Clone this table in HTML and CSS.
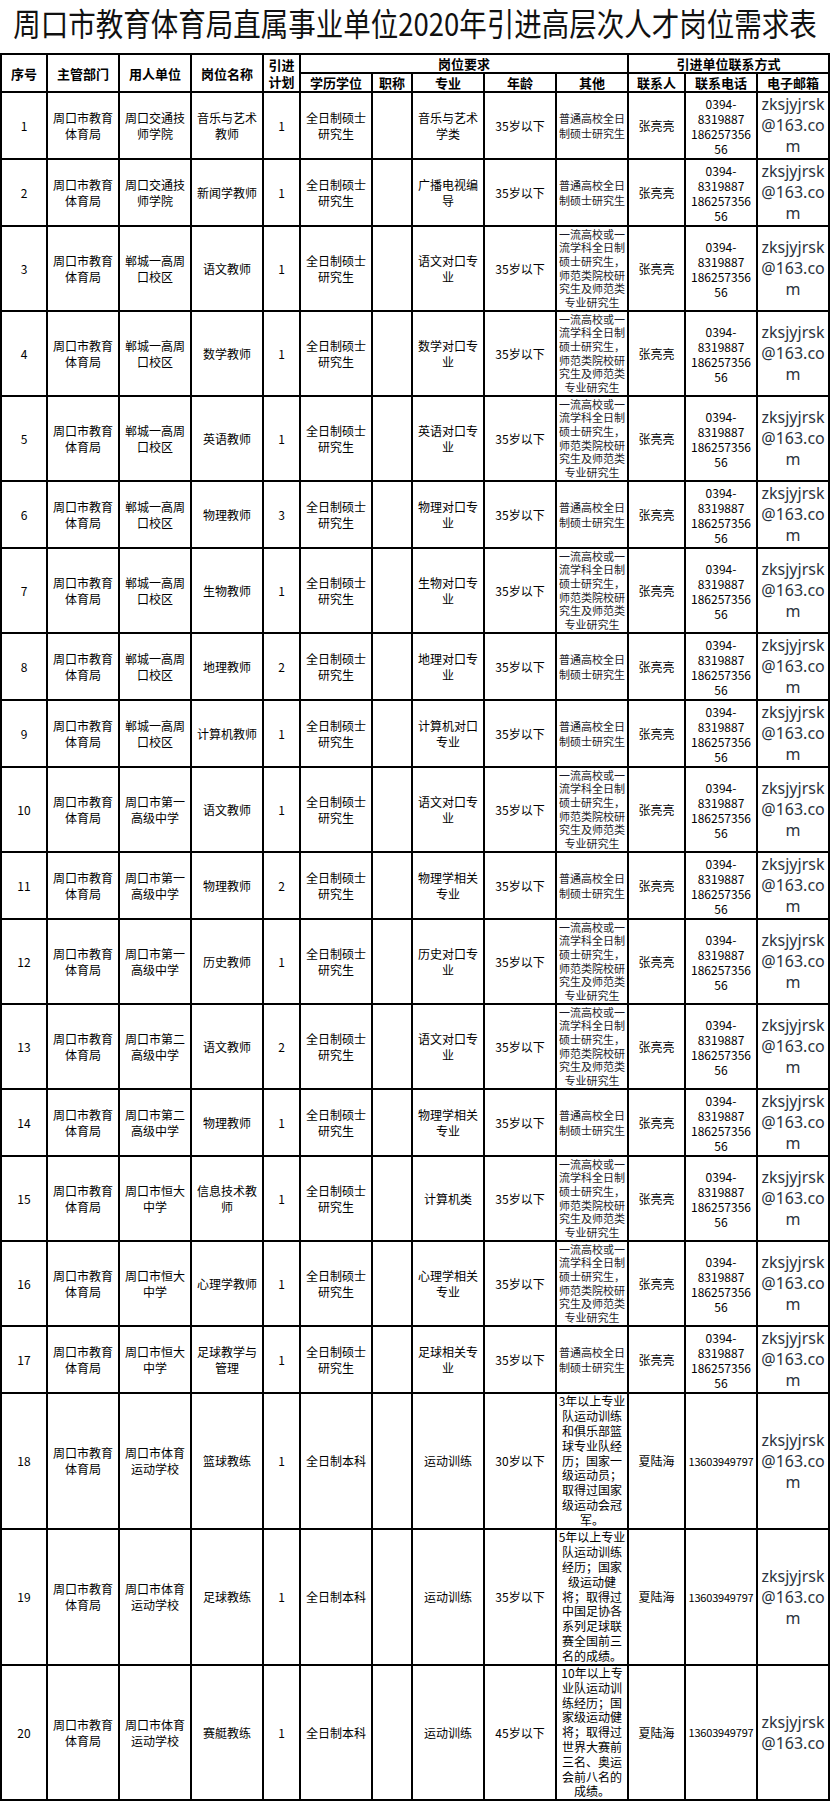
FILE: index.html
```html
<!DOCTYPE html>
<html lang="zh-CN">
<head>
<meta charset="utf-8">
<title>周口市教育体育局直属事业单位2020年引进高层次人才岗位需求表</title>
<link rel="stylesheet" href="styles.css">
</head>
<body>
<div class="title"><span class="title-text">周口市教育体育局直属事业单位2020年引进高层次人才岗位需求表</span></div>
<table class="sheet">
<colgroup>
<col class="c-no"><col class="c-w72"><col class="c-w72"><col class="c-w72"><col class="c-plan"><col class="c-w72"><col class="c-title"><col class="c-w72"><col class="c-w72"><col class="c-w72"><col class="c-person"><col class="c-w72"><col class="c-w72">
</colgroup>
<thead>
<tr class="h1">
<th rowspan="2">序号</th><th rowspan="2">主管部门</th><th rowspan="2">用人单位</th><th rowspan="2">岗位名称</th><th rowspan="2" class="plan">引进<br>计划</th>
<th colspan="5">岗位要求</th><th colspan="3">引进单位联系方式</th>
</tr>
<tr class="h2">
<th>学历学位</th><th>职称</th><th>专业</th><th>年龄</th><th>其他</th><th>联系人</th><th>联系电话</th><th>电子邮箱</th>
</tr>
</thead>
<tbody>
<tr class="r2"><td class="no">1</td><td>周口市教育体育局</td><td>周口交通技师学院</td><td>音乐与艺术教师</td><td class="no">1</td><td>全日制硕士研究生</td><td></td><td>音乐与艺术学类</td><td>35岁以下</td><td class="oth">普通高校全日<br>制硕士研究生</td><td>张亮亮</td><td class="tel">0394-<br>8319887<br>186257356<br>56</td><td class="mail">zksjyjrsk<br>@163.co<br>m</td></tr>
<tr class="r2"><td class="no">2</td><td>周口市教育体育局</td><td>周口交通技师学院</td><td>新闻学教师</td><td class="no">1</td><td>全日制硕士研究生</td><td></td><td>广播电视编导</td><td>35岁以下</td><td class="oth">普通高校全日<br>制硕士研究生</td><td>张亮亮</td><td class="tel">0394-<br>8319887<br>186257356<br>56</td><td class="mail">zksjyjrsk<br>@163.co<br>m</td></tr>
<tr class="r6"><td class="no">3</td><td>周口市教育体育局</td><td>郸城一高周口校区</td><td>语文教师</td><td class="no">1</td><td>全日制硕士研究生</td><td></td><td>语文对口专业</td><td>35岁以下</td><td class="oth oth-y">一流高校或一<br>流学科全日制<br>硕士研究生，<br>师范类院校研<br>究生及师范类<br>专业研究生</td><td>张亮亮</td><td class="tel">0394-<br>8319887<br>186257356<br>56</td><td class="mail">zksjyjrsk<br>@163.co<br>m</td></tr>
<tr class="r6"><td class="no">4</td><td>周口市教育体育局</td><td>郸城一高周口校区</td><td>数学教师</td><td class="no">1</td><td>全日制硕士研究生</td><td></td><td>数学对口专业</td><td>35岁以下</td><td class="oth oth-y">一流高校或一<br>流学科全日制<br>硕士研究生，<br>师范类院校研<br>究生及师范类<br>专业研究生</td><td>张亮亮</td><td class="tel">0394-<br>8319887<br>186257356<br>56</td><td class="mail">zksjyjrsk<br>@163.co<br>m</td></tr>
<tr class="r6"><td class="no">5</td><td>周口市教育体育局</td><td>郸城一高周口校区</td><td>英语教师</td><td class="no">1</td><td>全日制硕士研究生</td><td></td><td>英语对口专业</td><td>35岁以下</td><td class="oth oth-y">一流高校或一<br>流学科全日制<br>硕士研究生，<br>师范类院校研<br>究生及师范类<br>专业研究生</td><td>张亮亮</td><td class="tel">0394-<br>8319887<br>186257356<br>56</td><td class="mail">zksjyjrsk<br>@163.co<br>m</td></tr>
<tr class="r2"><td class="no">6</td><td>周口市教育体育局</td><td>郸城一高周口校区</td><td>物理教师</td><td class="no">3</td><td>全日制硕士研究生</td><td></td><td>物理对口专业</td><td>35岁以下</td><td class="oth">普通高校全日<br>制硕士研究生</td><td>张亮亮</td><td class="tel">0394-<br>8319887<br>186257356<br>56</td><td class="mail">zksjyjrsk<br>@163.co<br>m</td></tr>
<tr class="r6"><td class="no">7</td><td>周口市教育体育局</td><td>郸城一高周口校区</td><td>生物教师</td><td class="no">1</td><td>全日制硕士研究生</td><td></td><td>生物对口专业</td><td>35岁以下</td><td class="oth oth-y">一流高校或一<br>流学科全日制<br>硕士研究生，<br>师范类院校研<br>究生及师范类<br>专业研究生</td><td>张亮亮</td><td class="tel">0394-<br>8319887<br>186257356<br>56</td><td class="mail">zksjyjrsk<br>@163.co<br>m</td></tr>
<tr class="r2"><td class="no">8</td><td>周口市教育体育局</td><td>郸城一高周口校区</td><td>地理教师</td><td class="no">2</td><td>全日制硕士研究生</td><td></td><td>地理对口专业</td><td>35岁以下</td><td class="oth">普通高校全日<br>制硕士研究生</td><td>张亮亮</td><td class="tel">0394-<br>8319887<br>186257356<br>56</td><td class="mail">zksjyjrsk<br>@163.co<br>m</td></tr>
<tr class="r2"><td class="no">9</td><td>周口市教育体育局</td><td>郸城一高周口校区</td><td>计算机教师</td><td class="no">1</td><td>全日制硕士研究生</td><td></td><td>计算机对口专业</td><td>35岁以下</td><td class="oth">普通高校全日<br>制硕士研究生</td><td>张亮亮</td><td class="tel">0394-<br>8319887<br>186257356<br>56</td><td class="mail">zksjyjrsk<br>@163.co<br>m</td></tr>
<tr class="r6"><td class="no">10</td><td>周口市教育体育局</td><td>周口市第一高级中学</td><td>语文教师</td><td class="no">1</td><td>全日制硕士研究生</td><td></td><td>语文对口专业</td><td>35岁以下</td><td class="oth oth-y">一流高校或一<br>流学科全日制<br>硕士研究生，<br>师范类院校研<br>究生及师范类<br>专业研究生</td><td>张亮亮</td><td class="tel">0394-<br>8319887<br>186257356<br>56</td><td class="mail">zksjyjrsk<br>@163.co<br>m</td></tr>
<tr class="r2"><td class="no">11</td><td>周口市教育体育局</td><td>周口市第一高级中学</td><td>物理教师</td><td class="no">2</td><td>全日制硕士研究生</td><td></td><td>物理学相关专业</td><td>35岁以下</td><td class="oth">普通高校全日<br>制硕士研究生</td><td>张亮亮</td><td class="tel">0394-<br>8319887<br>186257356<br>56</td><td class="mail">zksjyjrsk<br>@163.co<br>m</td></tr>
<tr class="r6"><td class="no">12</td><td>周口市教育体育局</td><td>周口市第一高级中学</td><td>历史教师</td><td class="no">1</td><td>全日制硕士研究生</td><td></td><td>历史对口专业</td><td>35岁以下</td><td class="oth oth-y">一流高校或一<br>流学科全日制<br>硕士研究生，<br>师范类院校研<br>究生及师范类<br>专业研究生</td><td>张亮亮</td><td class="tel">0394-<br>8319887<br>186257356<br>56</td><td class="mail">zksjyjrsk<br>@163.co<br>m</td></tr>
<tr class="r6"><td class="no">13</td><td>周口市教育体育局</td><td>周口市第二高级中学</td><td>语文教师</td><td class="no">2</td><td>全日制硕士研究生</td><td></td><td>语文对口专业</td><td>35岁以下</td><td class="oth oth-y">一流高校或一<br>流学科全日制<br>硕士研究生，<br>师范类院校研<br>究生及师范类<br>专业研究生</td><td>张亮亮</td><td class="tel">0394-<br>8319887<br>186257356<br>56</td><td class="mail">zksjyjrsk<br>@163.co<br>m</td></tr>
<tr class="r2"><td class="no">14</td><td>周口市教育体育局</td><td>周口市第二高级中学</td><td>物理教师</td><td class="no">1</td><td>全日制硕士研究生</td><td></td><td>物理学相关专业</td><td>35岁以下</td><td class="oth">普通高校全日<br>制硕士研究生</td><td>张亮亮</td><td class="tel">0394-<br>8319887<br>186257356<br>56</td><td class="mail">zksjyjrsk<br>@163.co<br>m</td></tr>
<tr class="r6"><td class="no">15</td><td>周口市教育体育局</td><td>周口市恒大中学</td><td>信息技术教师</td><td class="no">1</td><td>全日制硕士研究生</td><td></td><td>计算机类</td><td>35岁以下</td><td class="oth oth-y">一流高校或一<br>流学科全日制<br>硕士研究生，<br>师范类院校研<br>究生及师范类<br>专业研究生</td><td>张亮亮</td><td class="tel">0394-<br>8319887<br>186257356<br>56</td><td class="mail">zksjyjrsk<br>@163.co<br>m</td></tr>
<tr class="r6"><td class="no">16</td><td>周口市教育体育局</td><td>周口市恒大中学</td><td>心理学教师</td><td class="no">1</td><td>全日制硕士研究生</td><td></td><td>心理学相关专业</td><td>35岁以下</td><td class="oth oth-y">一流高校或一<br>流学科全日制<br>硕士研究生，<br>师范类院校研<br>究生及师范类<br>专业研究生</td><td>张亮亮</td><td class="tel">0394-<br>8319887<br>186257356<br>56</td><td class="mail">zksjyjrsk<br>@163.co<br>m</td></tr>
<tr class="r2"><td class="no">17</td><td>周口市教育体育局</td><td>周口市恒大中学</td><td>足球教学与管理</td><td class="no">1</td><td>全日制硕士研究生</td><td></td><td>足球相关专业</td><td>35岁以下</td><td class="oth">普通高校全日<br>制硕士研究生</td><td>张亮亮</td><td class="tel">0394-<br>8319887<br>186257356<br>56</td><td class="mail">zksjyjrsk<br>@163.co<br>m</td></tr>
<tr class="r9"><td class="no">18</td><td>周口市教育体育局</td><td>周口市体育运动学校</td><td>篮球教练</td><td class="no">1</td><td>全日制本科</td><td></td><td>运动训练</td><td>30岁以下</td><td class="oth oth-l">3年以上专业<br>队运动训练<br>和俱乐部篮<br>球专业队经<br>历；国家一<br>级运动员；<br>取得过国家<br>级运动会冠<br>军。</td><td>夏陆海</td><td class="tel tel-1">13603949797</td><td class="mail">zksjyjrsk<br>@163.co<br>m</td></tr>
<tr class="r9"><td class="no">19</td><td>周口市教育体育局</td><td>周口市体育运动学校</td><td>足球教练</td><td class="no">1</td><td>全日制本科</td><td></td><td>运动训练</td><td>35岁以下</td><td class="oth oth-l">5年以上专业<br>队运动训练<br>经历；国家<br>级运动健<br>将；取得过<br>中国足协各<br>系列足球联<br>赛全国前三<br>名的成绩。</td><td>夏陆海</td><td class="tel tel-1">13603949797</td><td class="mail">zksjyjrsk<br>@163.co<br>m</td></tr>
<tr class="r9 last"><td class="no">20</td><td>周口市教育体育局</td><td>周口市体育运动学校</td><td>赛艇教练</td><td class="no">1</td><td>全日制本科</td><td></td><td>运动训练</td><td>45岁以下</td><td class="oth oth-l">10年以上专<br>业队运动训<br>练经历；国<br>家级运动健<br>将；取得过<br>世界大赛前<br>三名、奥运<br>会前八名的<br>成绩。</td><td>夏陆海</td><td class="tel tel-1">13603949797</td><td class="mail">zksjyjrsk<br>@163.co</td></tr>
</tbody>
</table>
</body>
</html>
```

FILE: styles.css
```css
html, body {
  margin: 0;
  padding: 0;
  background: #ffffff;
}

body {
  font-family: "Noto Sans CJK SC", "Noto Sans", sans-serif;
  color: #000000;
  width: 830px;
}

.title {
  height: 53px;
  text-align: center;
  white-space: nowrap;
  overflow: hidden;
}

.title-text {
  display: inline-block;
  font-size: 27.5px;
  line-height: 44px;
  letter-spacing: 0;
  transform: scaleY(1.15);
  transform-origin: 50% 50%;
  color: #111111;
}

.sheet {
  border-collapse: collapse;
  table-layout: fixed;
  width: 830px;
}

.c-no { width: 46px; }
.c-w72 { width: 72px; }
.c-plan { width: 37px; }
.c-title { width: 40px; }
.c-person { width: 57px; }

.sheet th,
.sheet td {
  border: 2px solid #000000;
  padding: 0 1px;
  text-align: center;
  vertical-align: middle;
  overflow: hidden;
}

.sheet th {
  font-size: 13px;
  font-weight: 700;
  line-height: 17px;
  white-space: nowrap;
}

.sheet .plan {
  line-height: 17px;
}

.h1, .h2 { height: 19px; }

.sheet td {
  font-size: 12px;
  line-height: 16px;
  font-weight: 400;
}

.r2 { height: 67px; }
.r6 { height: 85px; }
.r9 { height: 136px; }
.last { height: 135px; }

.sheet .no {
  font-size: 12px;
}

.sheet .oth {
  font-size: 11px;
  line-height: 15px;
  color: #1c1c28;
  white-space: nowrap;
}

.sheet .oth-y {
  line-height: 13.6px;
}

.sheet .oth-l {
  font-size: 12px;
  line-height: 14.8px;
  color: #000000;
}

.sheet .tel {
  font-size: 12px;
  line-height: 15px;
  white-space: nowrap;
}

.sheet .tel-1 {
  font-size: 11px;
  letter-spacing: -0.2px;
}

.sheet .mail {
  font-family: "Noto Sans", "Open Sans", sans-serif;
  font-size: 16px;
  line-height: 21px;
  color: #2b3440;
  white-space: nowrap;
}
```
